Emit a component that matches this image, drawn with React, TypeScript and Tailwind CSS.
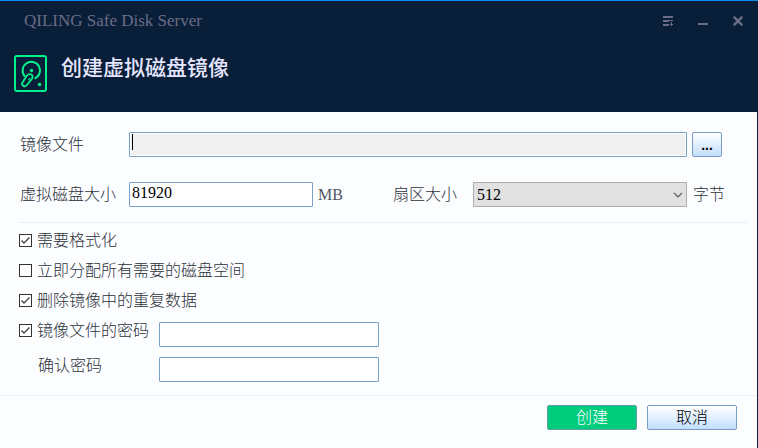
import React, { useState } from "react";

const fieldClass =
  "h-[25px] min-w-0 rounded-[1px] border border-[#7aa2c8] px-0.5 pb-1 leading-5 text-black outline-none";

const buttonClass =
  "h-[25px] rounded-[2px] border border-[#7a9cc4] bg-linear-to-b from-white to-[#c2dffb] text-black";

const DiskIcon = () => (
  <svg width="33" height="37" viewBox="0 0 33 37" fill="none" stroke="#00f08a" strokeWidth="2" aria-hidden="true">
    <rect x="1" y="1" width="31" height="35" rx="2" />
    <path d="M11 21.5A8.7 8.7 0 1 1 20.5 23.6" />
    <path d="M13 20.5c1.5-1.8 4.4-1.8 5.4.2.6 1.2.2 2-.4 2.9l-5.3 6.7c-1.8 2.2-5.6.3-4.4-2.6z" strokeWidth="1.8" />
    <path d="M15.9 23l-1.6 2" strokeWidth="1.2" />
    <circle cx="17.5" cy="15.5" r="1.7" fill="#00f08a" stroke="none" />
    <circle cx="25.5" cy="29.5" r="1.8" fill="#00f08a" stroke="none" />
  </svg>
);

const Check = ({ label, initial = false }: { label: string; initial?: boolean }) => {
  const [checked, setChecked] = useState(initial);
  return (
    <label className="flex h-[30px] items-center gap-[5px]">
      <span className="relative block size-[13px]">
        <input
          type="checkbox"
          checked={checked}
          onChange={(e) => setChecked(e.target.checked)}
          className="block size-[13px] appearance-none border border-[#333] bg-white"
        />
        {checked && (
          <svg className="pointer-events-none absolute inset-0" width="13" height="13" fill="none" stroke="#444" strokeWidth="1.4" aria-hidden="true">
            <path d="M2.5 6.5L5 9L10.5 3.5" />
          </svg>
        )}
      </span>
      <span className="whitespace-nowrap pt-0.5">{label}</span>
    </label>
  );
};

const TitleBar = () => (
  <header className="h-28 border-t border-[#0a8cf5] bg-[#091e38]">
    <div className="flex h-[39px] items-center justify-between pl-6 pr-[15px] text-[#6b6c86]">
      <span className="text-[17px]">QILING Safe Disk Server</span>
      <div className="flex gap-[25px]">
        <button aria-label="Menu">
          <svg width="10" height="10" shapeRendering="crispEdges" fill="currentColor">
            <path d="M0 0h10v2H0zM0 4h10v1H6v1H0zM0 8h6v2H0zM8 6h1v2h1v1H9v1H8V9H7V8h1z" />
          </svg>
        </button>
        <button aria-label="Minimize">
          <svg width="10" height="10" fill="currentColor">
            <path d="M0 7h10v2H0z" />
          </svg>
        </button>
        <button aria-label="Close">
          <svg width="10" height="10" stroke="currentColor" strokeWidth="2.4">
            <path d="M.7.7l8.6 8.6M9.3.7L.7 9.3" />
          </svg>
        </button>
      </div>
    </div>
    <div className="flex gap-[14px] pl-[14px] pt-[15px]">
      <DiskIcon />
      <h1 className="text-[21px] font-medium leading-[26px] text-[#e6e6ff]">创建虚拟磁盘镜像</h1>
    </div>
  </header>
);

const App = () => {
  return (
    <div className="flex min-h-screen flex-col bg-[#fcfdff] font-['Liberation_Serif','Noto_Sans_CJK_SC',serif] text-base leading-6 text-[#2c313a]">
      <TitleBar />
      <main className="flex flex-1 flex-col border-r border-[#091e38]">
        <div className="flex items-center pl-5 pr-[35px] pt-5">
          <label htmlFor="file" className="w-[109px] font-light">镜像文件</label>
          <div className="relative flex-1">
            <input
              id="file"
              autoFocus
              className={`${fieldClass} block w-full bg-[#f0f0f0] caret-transparent ring-1 ring-white ring-inset`}
            />
            <span className="pointer-events-none absolute left-[3px] top-0.5 h-4 w-px bg-black" />
          </div>
          <button
            aria-label="Browse"
            className={`${buttonClass} ml-[5px] w-[30px] font-['Liberation_Sans',sans-serif] text-sm font-bold`}
          >
            ...
          </button>
        </div>
        <div className="flex items-center pl-5 pr-8 pt-[25px]">
          <label htmlFor="size" className="w-[109px] font-light">虚拟磁盘大小</label>
          <input id="size" defaultValue="81920" className={`${fieldClass} w-[184px] bg-white`} />
          <span className="ml-[5px] w-[75px] text-[#50555f]">MB</span>
          <label htmlFor="sector" className="w-20 font-light">扇区大小</label>
          <div className="relative flex-1">
            <select
              id="sector"
              className="block h-[25px] w-full appearance-none border border-[#adadad] bg-[#e1e1e1] px-[3px] text-black outline-none"
            >
              <option>512</option>
              <option>4096</option>
            </select>
            <svg className="pointer-events-none absolute right-1 top-2.5" width="10" height="6" fill="none" stroke="#555" strokeWidth="1.2" aria-hidden="true">
              <path d="M1 .8l4 4 4-4" />
            </svg>
          </div>
          <span className="ml-1.5 font-light">字节</span>
        </div>
        <hr className="ml-[19px] mr-2.5 mt-[15px] border-[#eeeff2]" />
        <section className="pl-[19px] pt-0.5 font-light">
          <Check label="需要格式化" initial />
          <Check label="立即分配所有需要的磁盘空间" />
          <Check label="删除镜像中的重复数据" initial />
          <div className="flex items-start">
            <div className="w-[140px]">
              <Check label="镜像文件的密码" initial />
            </div>
            <input type="password" aria-label="镜像文件的密码" className={`${fieldClass} mt-[7px] w-[220px] bg-white`} />
          </div>
          <div className="flex items-start pt-[3px]">
            <label htmlFor="confirm" className="w-[140px] pl-[19px] pt-1">确认密码</label>
            <input id="confirm" type="password" className={`${fieldClass} mt-[7px] w-[220px] bg-white`} />
          </div>
        </section>
        <footer className="mt-auto flex h-[53px] items-start justify-end gap-2.5 border-t border-[#eeeff2] pr-5 pt-[9px] font-light">
          <button className="h-[25px] w-[90px] rounded-[2px] border border-[#5f9fa5] bg-[#00cc7e] text-white">创建</button>
          <button className={`${buttonClass} w-[90px]`}>取消</button>
        </footer>
      </main>
    </div>
  );
};

export default App;
